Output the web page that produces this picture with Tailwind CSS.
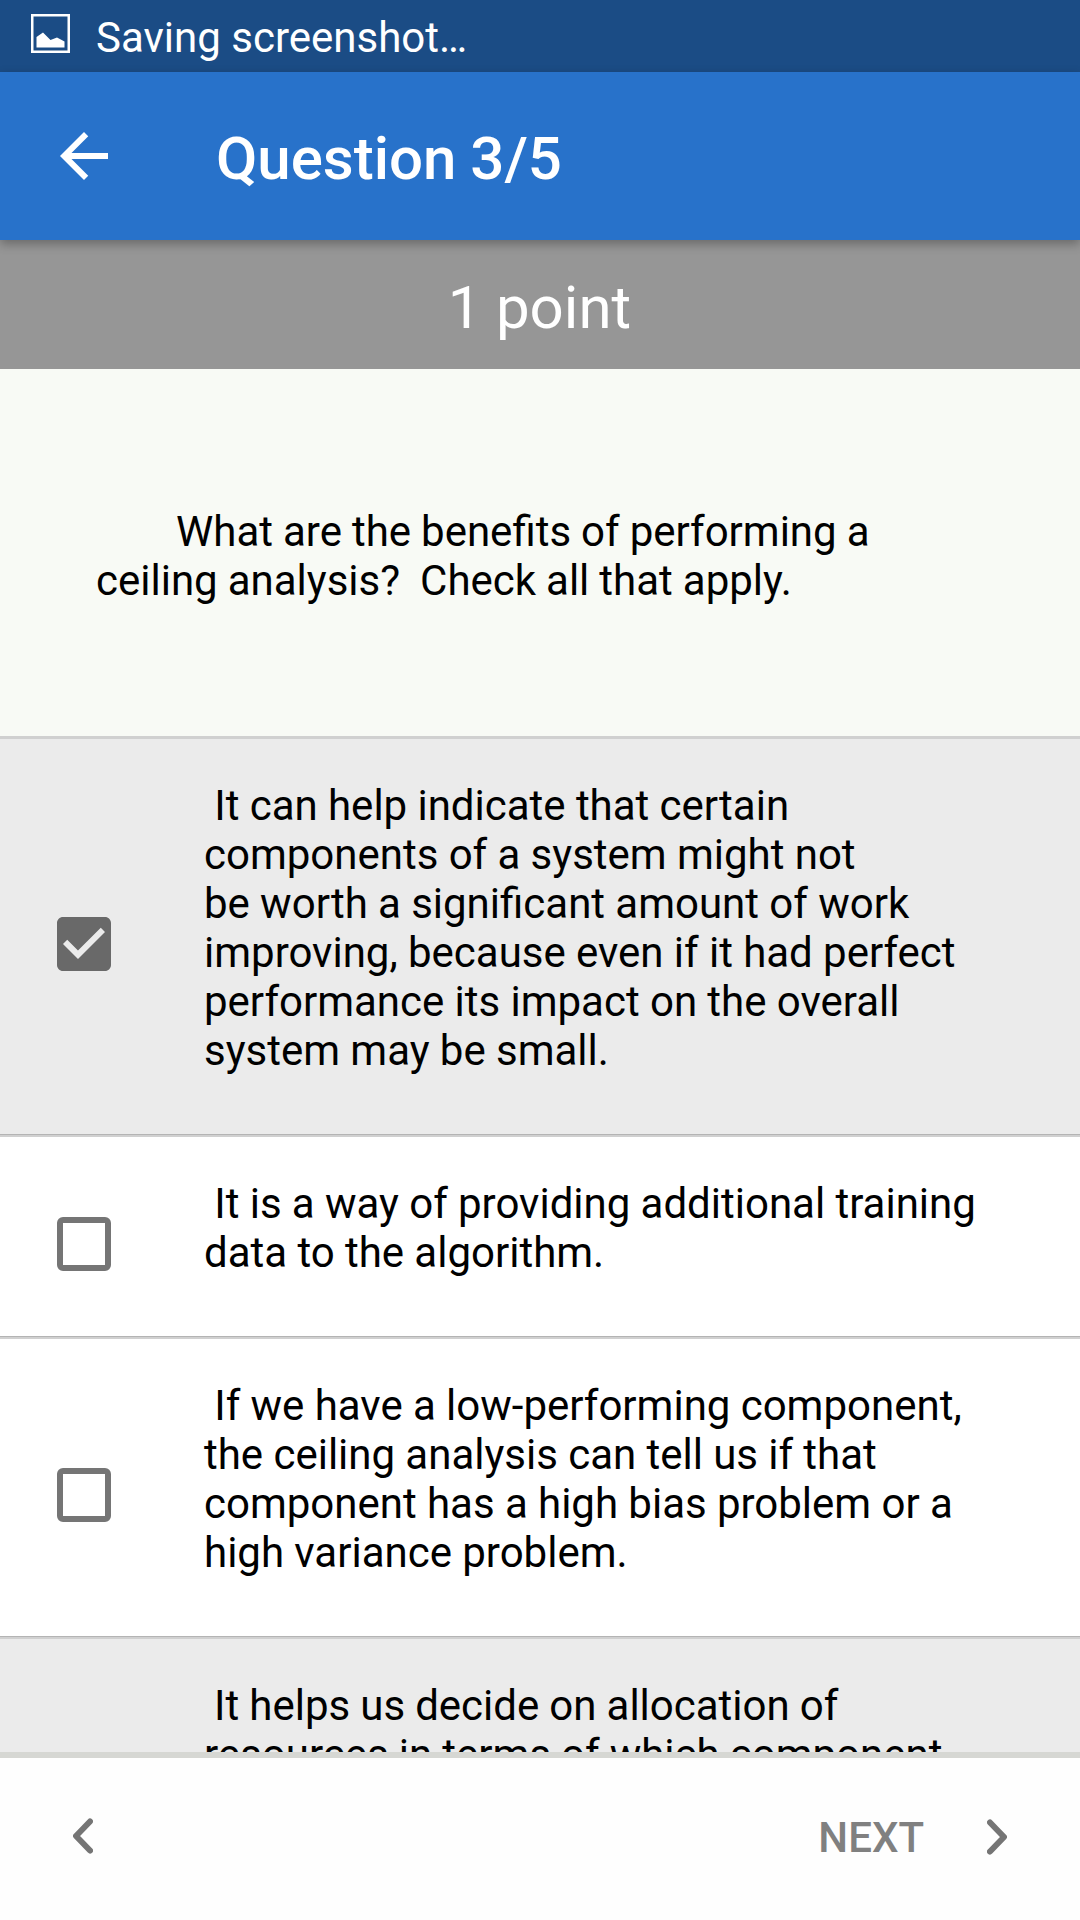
<!DOCTYPE html>
<html lang="en"><head><meta charset="utf-8"><title>Question 3/5</title>
<script src="https://cdn.jsdelivr.net/npm/@tailwindcss/browser@4"></script></head>
<body class="bg-white font-['Roboto',sans-serif] text-black">
<main class="flex h-[1920px] w-[1080px] flex-col overflow-hidden text-[42px] leading-[49px]">
<div class="flex h-[72px] shrink-0 items-center gap-[26px] bg-[#1b4c85] pl-[31px] text-white">
<svg class="mt-[-6px] h-[39px] w-[39px]" viewBox="0 0 39 39"><path d="M1.25 1.25h36.5v36.5h-36.5z" fill="none" stroke="currentColor" stroke-width="2.5"/><path d="M5.5 33.5V23L12 18.5 19.5 26 26 23.5 33.5 27.5v6z" fill="currentColor"/></svg>
<span class="pt-[2px] whitespace-pre">Saving screenshot…</span></div>
<header class="relative z-10 flex h-[168px] shrink-0 items-center bg-[#2872ca] pl-[60px] text-white shadow-[0_4px_10px_rgba(0,0,0,.3)]">
<svg class="h-[48px] w-[48px]" viewBox="4 4 16 16" fill="currentColor"><path d="M20 11H7.83l5.59-5.59L12 4l-8 8 8 8 1.41-1.41L7.83 13H20v-2z"/></svg>
<h1 class="pl-[108px] pt-[5px] text-[60px] font-medium leading-[70px] [word-spacing:-1px]">Question 3/5</h1></header>
<div class="flex h-[129px] shrink-0 items-center justify-center bg-[#969696] pt-[5px] pr-[1px] text-[60px] text-white [word-spacing:-0.5px]">1 point</div>
<section class="h-[370px] shrink-0 border-b-3 border-[#d0d0d0] bg-[#f8faf5] pl-[96px] pt-[138px]"><p class="whitespace-pre [word-spacing:-0.42px]">        What are the benefits of performing a
ceiling analysis?  Check all that apply.</p></section>
<div class="flex min-h-0 flex-1 flex-col overflow-hidden [word-spacing:-0.15px]">
<section class="flex h-[395px] shrink-0 items-start bg-[#ebebeb] pt-[42px] pl-[57px]">
<svg class="mt-[136px] h-[54px] w-[54px]" viewBox="3 3 18 18"><path fill="#696969" d="M19 3H5c-1.11 0-2 .9-2 2v14c0 1.1.89 2 2 2h14c1.11 0 2-.9 2-2V5c0-1.1-.89-2-2-2zm-9 14l-5-5 1.41-1.41L10 14.17l7.59-7.59L19 8l-9 9z"/></svg>
<p class="pl-[93px] whitespace-pre"> It can help indicate that certain
components of a system might not
be worth a significant amount of work
improving, because even if it had perfect
performance its impact on the overall
system may be small.</p></section>
<div class="h-[3px] shrink-0 border-t border-[#b4b4b4] bg-[#d0d0d0]"></div>
<section class="flex h-[199px] shrink-0 items-start pt-[42px] pl-[57px]">
<div class="mt-[38px] h-[54px] w-[54px] rounded-[6px] border-6 border-[#757575]"></div>
<p class="pl-[93px] whitespace-pre"> It is a way of providing additional training
data to the algorithm.</p></section>
<div class="h-[3px] shrink-0 border-t border-[#b4b4b4] bg-[#d0d0d0]"></div>
<section class="flex h-[297px] shrink-0 items-start pt-[42px] pl-[57px]">
<div class="mt-[87px] h-[54px] w-[54px] rounded-[6px] border-6 border-[#757575]"></div>
<p class="pl-[93px] whitespace-pre"> If we have a low-performing component,
the ceiling analysis can tell us if that
component has a high bias problem or a
high variance problem.</p></section>
<div class="h-[3px] shrink-0 border-t border-[#b4b4b4] bg-[#d0d0d0]"></div>
<section class="h-[297px] shrink-0 bg-[#ebebeb] pt-[42px] pl-[204px]">
<p class="whitespace-pre [word-spacing:-0.35px]"> It helps us decide on allocation of
resources in terms of which component</p></section>
</div>
<footer class="flex h-[168px] shrink-0 items-center justify-between border-t-6 border-[#d6d7d3] bg-[#fefefe] pr-[73px] pb-[5px] pl-[73px] text-[#757575]">
<svg class="mt-[-1px] h-[36px] w-[20px]" viewBox="0 0 20 36" fill="none" stroke="currentColor" stroke-width="6" stroke-linecap="round" stroke-linejoin="round"><path d="M17 3.5 3 18l14 14.5"/></svg>
<div class="flex items-center gap-[63px]"><span class="pt-[2px] font-medium text-[#808080]">NEXT</span>
<svg class="h-[36px] w-[20px]" viewBox="0 0 20 36" fill="none" stroke="currentColor" stroke-width="6" stroke-linecap="round" stroke-linejoin="round"><path d="M3 3.5 17 18 3 32.5"/></svg></div>
</footer>
</main></body></html>
